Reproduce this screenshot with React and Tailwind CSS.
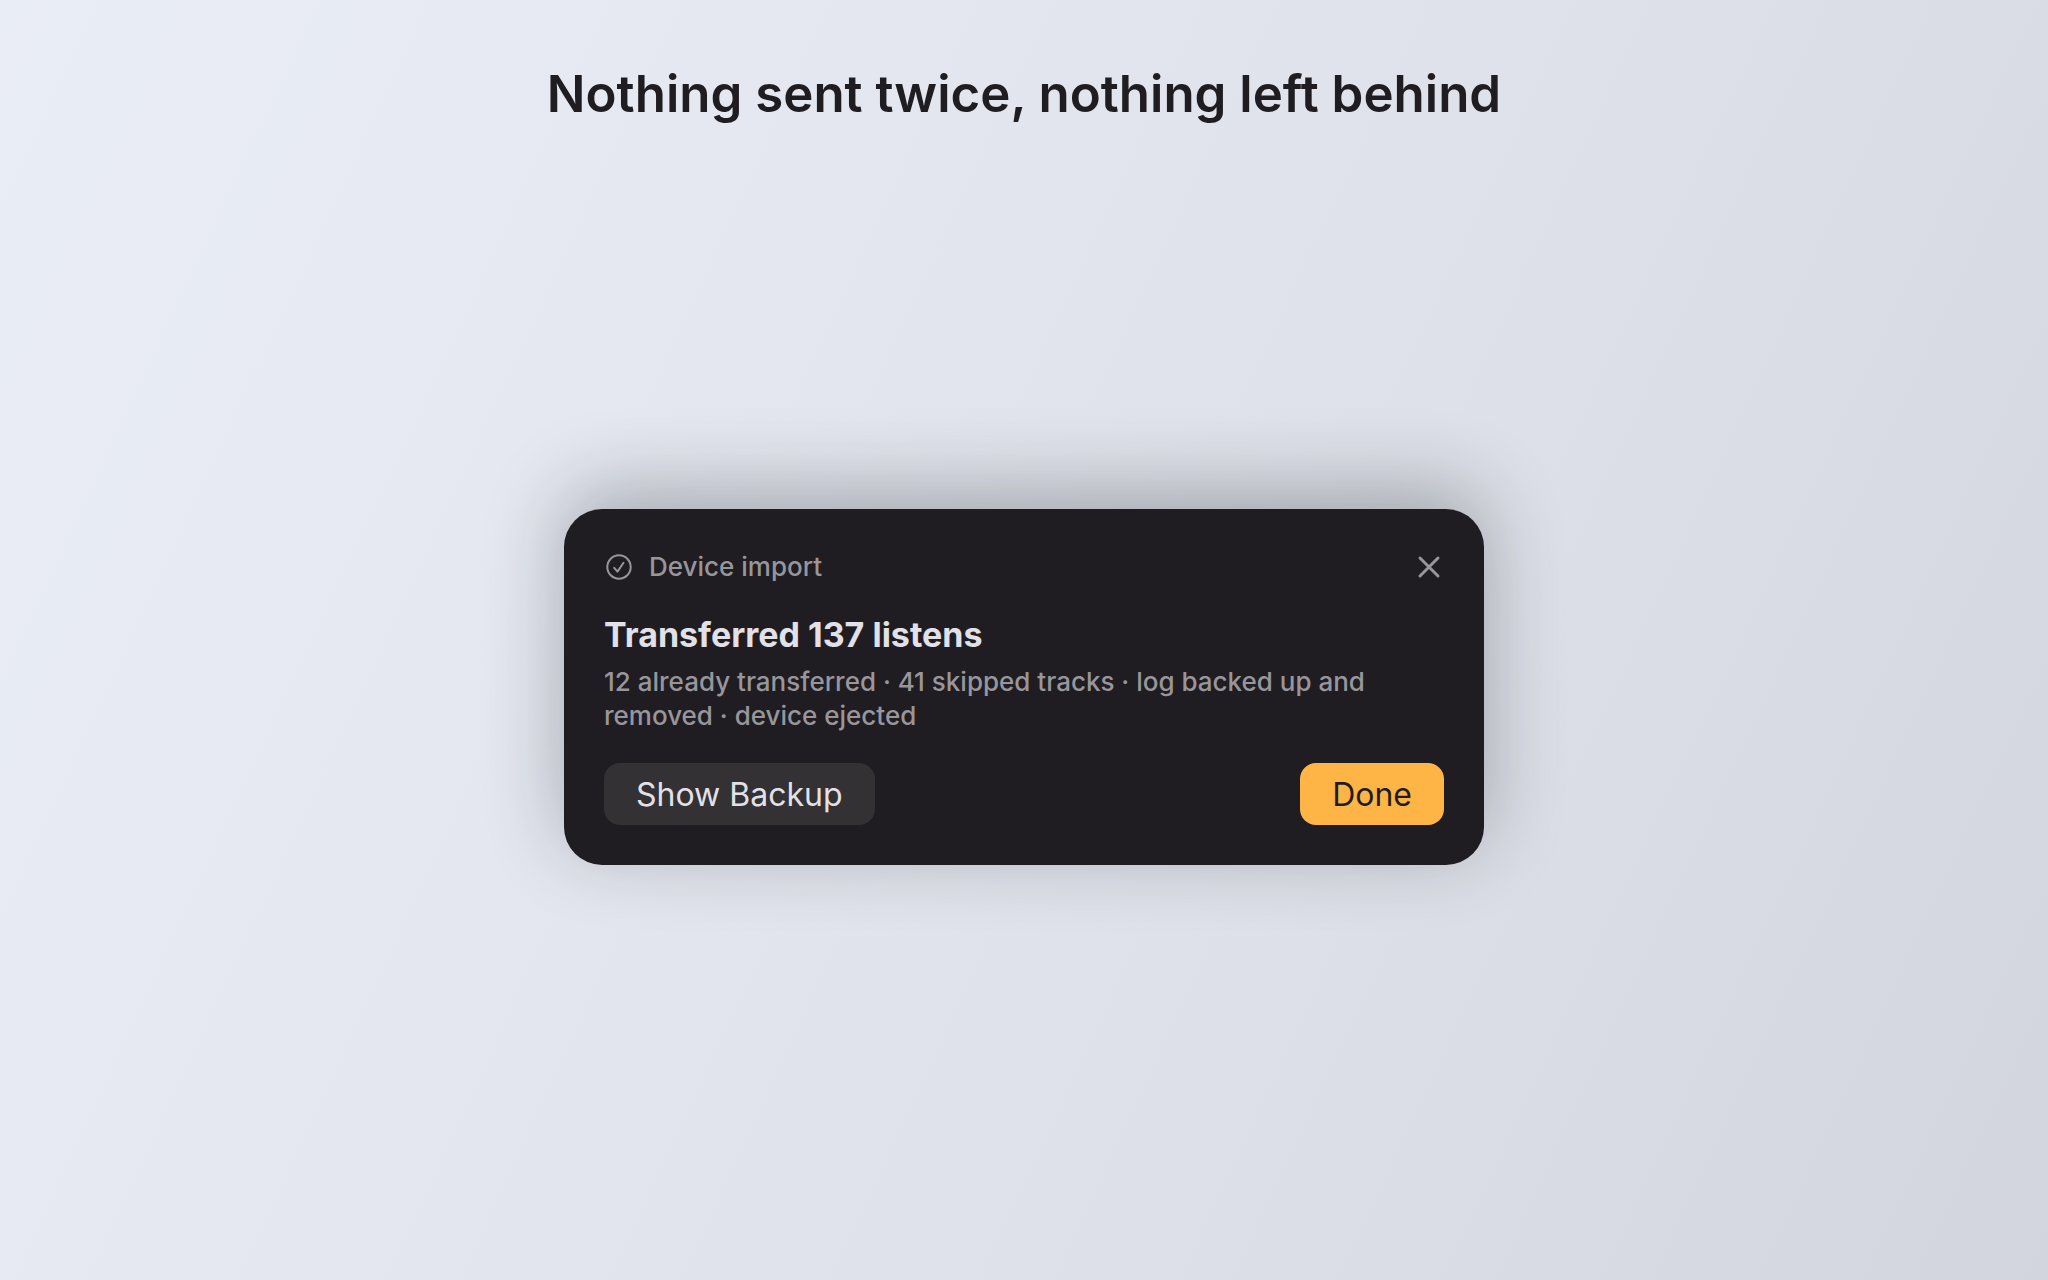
const result = {
  source: 'Device import',
  title: 'Transferred 137 listens',
  details: ['12 already transferred', '41 skipped tracks', 'log backed up and removed', 'device ejected'],
}

function CheckCircle() {
  return (
    <svg className="w-7 h-7" viewBox="0 0 28 28" fill="none" stroke="currentColor" strokeWidth={2} strokeLinecap="round" strokeLinejoin="round" aria-hidden="true">
      <circle cx="14" cy="14" r="11.7" />
      <path d="M9.2 14.8l3.3 3.8 6-8.8" />
    </svg>
  )
}

function CloseIcon() {
  return (
    <svg className="w-7 h-7" viewBox="0 0 28 28" fill="none" stroke="currentColor" strokeWidth={3} strokeLinecap="round" aria-hidden="true">
      <path d="M5 5l18 18M23 5L5 23" />
    </svg>
  )
}

function ImportCard() {
  return (
    <section className="w-full max-w-[920px] rounded-[38px] bg-[#1f1d22] p-10 shadow-[0_-18px_80px_rgba(20,22,28,0.3)]">
      <div className="flex items-center justify-between h-9 px-px text-[#98969b]">
        <div className="flex items-center gap-4">
          <CheckCircle />
          <span className="text-[26px] leading-9 font-medium">{result.source}</span>
        </div>
        <button type="button" aria-label="Close">
          <CloseIcon />
        </button>
      </div>

      <h2 className="mt-[30px] text-[34px] leading-10 font-bold text-[#e2e1e8]">{result.title}</h2>
      <p className="mt-[10px] text-[26px] leading-[34px] font-medium text-[#98969b]">{result.details.join(' · ')}</p>

      <div className="mt-[30px] flex items-center justify-between">
        <button type="button" className="rounded-2xl bg-[#333134] px-8 pt-0.5 h-[62px] text-[32px] text-[#e2e1e8]">
          Show Backup
        </button>
        <button type="button" className="rounded-2xl bg-[#ffb545] px-8 pt-0.5 h-[62px] text-[32px] text-[#1f1d22]">
          Done
        </button>
      </div>
    </section>
  )
}

export default function App() {
  return (
    <main className="min-h-screen flex flex-col items-center px-6 pt-[62px] pb-8 bg-[linear-gradient(115deg,#e9edf6_0%,#e7eaf3_20%,#dde0e8_65%,#d2d5de_100%)] font-['Inter','Liberation_Sans',sans-serif]">
      <h1 className="text-[51px] leading-[64px] font-semibold text-center text-[#1f1d22]">Nothing sent twice, nothing left behind</h1>
      <div className="flex-1 w-full flex items-center justify-center">
        <ImportCard />
      </div>
    </main>
  )
}
